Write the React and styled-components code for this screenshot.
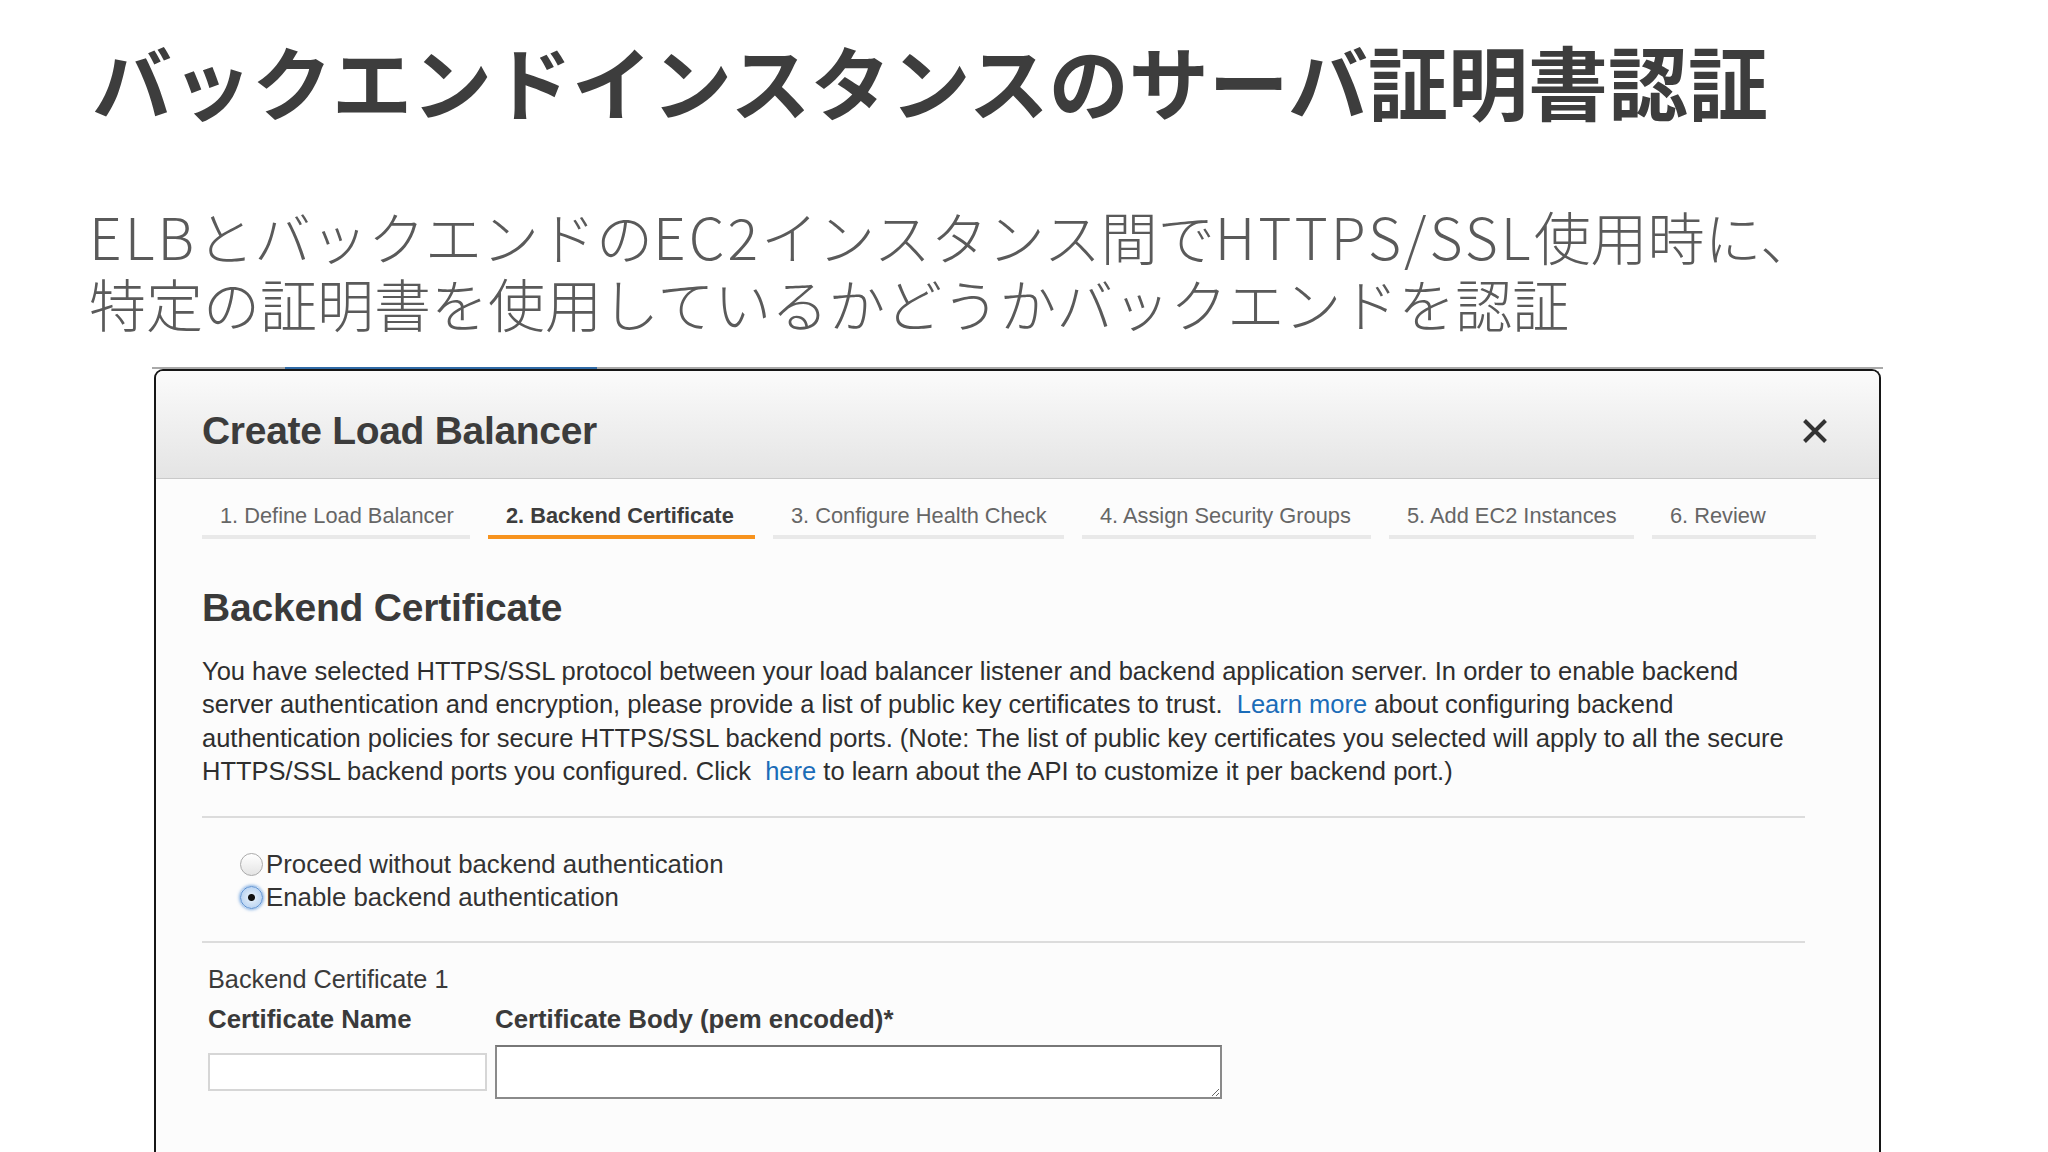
import styled, { createGlobalStyle } from "styled-components";

const GlobalStyle = createGlobalStyle`
  html, body {
    margin: 0;
    padding: 0;
    background: #ffffff;
  }
  body {
    width: 2048px;
    height: 1152px;
    overflow: hidden;
    font-family: "Liberation Sans", Arial, sans-serif;
  }
`;

const TABS = [
  { label: "1. Define Load Balancer", width: 268 },
  { label: "2. Backend Certificate", width: 267 },
  { label: "3. Configure Health Check", width: 291 },
  { label: "4. Assign Security Groups", width: 289 },
  { label: "5. Add EC2 Instances", width: 245 },
  { label: "6. Review", width: 164 },
];

function CloseIcon() {
  return (
    <svg width="26" height="26" viewBox="0 0 26 26">
      <path
        d="M2.5 2.5 L23.5 23.5 M23.5 2.5 L2.5 23.5"
        stroke="#333"
        strokeWidth="4"
        strokeLinecap="butt"
        fill="none"
      />
    </svg>
  );
}

function App() {
  return (
    <Page>
      <GlobalStyle />
      <Title>バックエンドインスタンスのサーバ証明書認証</Title>
      <Subtitle>
        <Latin>ELB</Latin>とバックエンドの<Latin>EC2</Latin>インスタンス間で
        <Latin>HTTPS/SSL</Latin>使用時に、
        <br />
        特定の証明書を使用しているかどうかバックエンドを認証
      </Subtitle>

      <Backdrop>
        <BackdropSegment />
        <BackdropSegment $active />
        <BackdropSegment $grow />
      </Backdrop>

      <Dialog>
        <DialogHeader>
          <DialogTitle>Create Load Balancer</DialogTitle>
          <CloseButton>
            <CloseIcon />
          </CloseButton>
        </DialogHeader>

        <DialogBody>
          <TabRow>
            {TABS.map((tab, i) => (
              <Tab key={tab.label} $width={tab.width} $active={i === 1}>
                {tab.label}
              </Tab>
            ))}
          </TabRow>

          <Heading>Backend Certificate</Heading>
          <Paragraph>
            You have selected HTTPS/SSL protocol between your load balancer
            listener and backend application server. In order to enable backend
            <br />
            server authentication and encryption, please provide a list of
            public key certificates to trust.&nbsp;&nbsp;<Link>Learn more</Link>{" "}
            about configuring backend
            <br />
            authentication policies for secure HTTPS/SSL backend ports. (Note:
            The list of public key certificates you selected will apply to all
            the secure
            <br />
            HTTPS/SSL backend ports you configured. Click&nbsp; <Link>here</Link>{" "}
            to learn about the API to customize it per backend port.)
          </Paragraph>

          <Divider />

          <RadioGroup>
            <RadioRow>
              <Radio />
              Proceed without backend authentication
            </RadioRow>
            <RadioRow>
              <Radio $checked />
              Enable backend authentication
            </RadioRow>
          </RadioGroup>

          <Divider $gap="27px" />

          <CertBlock>
            <CertTitle>Backend Certificate 1</CertTitle>
            <FieldRow>
              <Field $width="279px">
                <FieldLabel>Certificate Name</FieldLabel>
                <TextInput type="text" />
              </Field>
              <Field $width="727px">
                <FieldLabel>Certificate Body (pem encoded)*</FieldLabel>
                <TextArea />
              </Field>
            </FieldRow>
          </CertBlock>
        </DialogBody>
      </Dialog>
    </Page>
  );
}

const Page = styled.div`
  display: flex;
  flex-direction: column;
  height: 1152px;
  padding-top: 39px;
  box-sizing: border-box;
`;

const Title = styled.h1`
  margin: 0 0 0 92px;
  font-family: "Noto Sans CJK JP", "Noto Sans", sans-serif;
  font-weight: 700;
  font-size: 80px;
  line-height: 80px;
  color: #3d3d3d;
`;

const Subtitle = styled.p`
  margin: 83px 0 0 89px;
  font-family: "Noto Sans CJK JP", "Noto Sans", sans-serif;
  font-weight: 300;
  font-size: 57px;
  line-height: 67px;
  color: #5a5a5a;
`;

const Latin = styled.span`
  display: inline-block;
  line-height: 1;
  letter-spacing: 3px;
`;

const Backdrop = styled.div`
  display: flex;
  margin: 31px 0 0 152px;
  width: 1731px;
  height: 2px;
`;

const BackdropSegment = styled.div`
  width: ${(p) => (p.$active ? "312px" : "133px")};
  flex: ${(p) => (p.$grow ? "1" : "none")};
  background: ${(p) => (p.$active ? "#2f6aa6" : "#a9a9a9")};
`;

const Dialog = styled.div`
  flex: 1;
  margin-left: 154px;
  width: 1727px;
  box-sizing: border-box;
  border: 2px solid #161616;
  border-bottom: none;
  border-radius: 9px 9px 0 0;
  background: #fcfcfc;
  display: flex;
  flex-direction: column;
  overflow: hidden;
`;

const DialogHeader = styled.div`
  display: flex;
  align-items: center;
  justify-content: space-between;
  height: 108px;
  padding: 12px 51px 0 46px;
  box-sizing: border-box;
  background: linear-gradient(#fbfbfb, #e4e4e4);
  border-bottom: 1px solid #c9c9c9;
`;

const DialogTitle = styled.h2`
  margin: 0;
  font-size: 39px;
  font-weight: 700;
  color: #3c3c3c;
  letter-spacing: -0.3px;
`;

const CloseButton = styled.div`
  display: flex;
  width: 26px;
  height: 26px;
`;

const DialogBody = styled.div`
  padding: 0 40px 0 46px;
  color: #333;
`;

const TabRow = styled.div`
  display: flex;
  gap: 18px;
`;

const Tab = styled.div`
  flex: none;
  width: ${(p) => p.$width}px;
  box-sizing: border-box;
  padding: 24px 17px 6px 18px;
  font-size: 21.8px;
  line-height: 26px;
  white-space: nowrap;
  color: ${(p) => (p.$active ? "#3d3d3d" : "#666")};
  font-weight: ${(p) => (p.$active ? 700 : 400)};
  border-bottom: 4px solid ${(p) => (p.$active ? "#f7931e" : "#e9e9e9")};
`;

const Heading = styled.h3`
  margin: 47px 0 0;
  font-size: 39px;
  line-height: 44px;
  font-weight: 700;
  color: #3a3a3a;
  letter-spacing: -0.2px;
`;

const Paragraph = styled.p`
  margin: 25px 0 0;
  font-size: 25.5px;
  line-height: 33.3px;
  color: #2e2e2e;
  white-space: nowrap;
`;

const Link = styled.span`
  color: #1b6cb8;
`;

const Divider = styled.hr`
  margin: ${(p) => p.$gap || "28px"} 34px 0 0;
  border: none;
  height: 2px;
  background: #dcdcdc;
`;

const RadioGroup = styled.div`
  display: flex;
  flex-direction: column;
  margin: 30px 0 0 38px;
`;

const RadioRow = styled.label`
  display: flex;
  align-items: center;
  gap: 3px;
  font-size: 25.8px;
  line-height: 33px;
  color: #333;
`;

const Radio = styled.span`
  width: 23px;
  height: 23px;
  border-radius: 50%;
  box-sizing: border-box;
  border: 1px solid ${(p) => (p.$checked ? "#5a8fd0" : "#aaa")};
  background: ${(p) =>
    p.$checked
      ? "radial-gradient(circle, #111 0 3px, #dbe9f8 4px, #a8c8ee 100%)"
      : "linear-gradient(#fff, #e4e4e4)"};
  box-shadow: ${(p) =>
    p.$checked ? "0 0 3px 1px rgba(90, 150, 220, 0.7)" : "none"};
`;

const CertBlock = styled.div`
  margin: 21px 0 0 6px;
`;

const CertTitle = styled.div`
  font-size: 25.3px;
  line-height: 30px;
  color: #3a3a3a;
`;

const FieldRow = styled.div`
  display: flex;
  gap: 8px;
  margin-top: 10px;
`;

const Field = styled.div`
  display: flex;
  flex-direction: column;
  width: ${(p) => p.$width};
`;

const FieldLabel = styled.div`
  font-size: 25.8px;
  line-height: 30px;
  font-weight: 700;
  color: #3a3a3a;
  white-space: nowrap;
`;

const TextInput = styled.input`
  margin-top: 19px;
  height: 38px;
  box-sizing: border-box;
  border: 2px solid #d6d6d6;
  background: #fff;
`;

const TextArea = styled.textarea`
  margin-top: 11px;
  height: 54px;
  box-sizing: border-box;
  border: 2px solid #8a8a8a;
  border-top-color: #777;
  background: #fff;
  resize: both;
`;

export default App;
